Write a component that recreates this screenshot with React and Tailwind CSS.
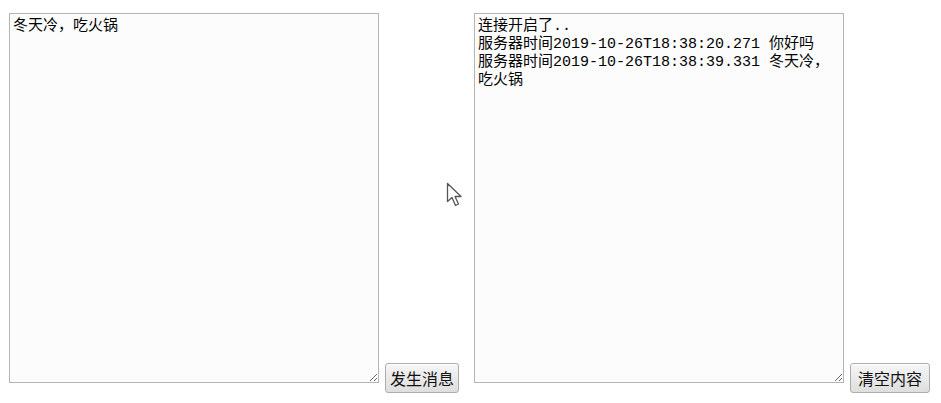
import React from 'react';

function Cursor() {
  return (
    <svg className="absolute left-[446px] top-[182px]" width="18" height="26" viewBox="0 0 18 26">
      <path
        d="M1.5 1.5 L1.5 19.5 L6 15.5 L9.5 23.5 L12.5 22 L9 14.5 L15 14.5 Z"
        fill="#ffffff"
        stroke="#555555"
        strokeWidth="1.3"
        strokeLinejoin="round"
      />
    </svg>
  );
}

export default function App() {
  const log =
    '连接开启了..\n服务器时间2019-10-26T18:38:20.271 你好吗\n服务器时间2019-10-26T18:38:39.331 冬天冷，吃火锅';

  return (
    <div className="relative w-[941px] h-[403px] bg-white">
      <div className="flex items-end pl-[9px] pt-[13px]">
        <textarea
          className="w-[370px] h-[370px] mb-[10px] border border-[#b4b4b4] bg-[#fcfcfc] px-[3px] pt-[4px] pb-[3px] font-['Liberation_Mono','Noto_Sans_CJK_SC',monospace] text-[15px] leading-[18px] text-black outline-none"
          defaultValue="冬天冷，吃火锅"
        />
        <button className="ml-[6px] w-[74px] h-[30px] rounded-[3px] border border-[#adadad] bg-gradient-to-b from-[#f6f6f6] to-[#dedede] font-['Noto_Sans_CJK_SC',sans-serif] text-[16px] text-[#111] shadow-[inset_0_1px_0_#fff]">
          发生消息
        </button>
        <textarea
          className="ml-[15px] w-[370px] h-[370px] mb-[10px] border border-[#b4b4b4] bg-[#fcfcfc] px-[3px] pt-[4px] pb-[3px] font-['Liberation_Mono','Noto_Sans_CJK_SC',monospace] text-[15px] leading-[18px] text-black outline-none"
          defaultValue={log}
        />
        <button className="ml-[6px] w-[80px] h-[30px] rounded-[3px] border border-[#adadad] bg-gradient-to-b from-[#f6f6f6] to-[#dedede] font-['Noto_Sans_CJK_SC',sans-serif] text-[16px] text-[#111] shadow-[inset_0_1px_0_#fff]">
          清空内容
        </button>
      </div>
      <Cursor />
    </div>
  );
}
